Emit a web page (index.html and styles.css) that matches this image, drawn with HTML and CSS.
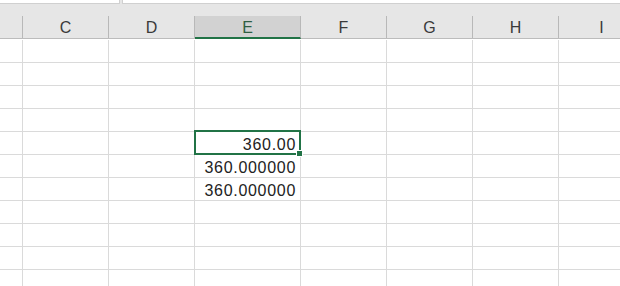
FILE: index.html
```html
<!DOCTYPE html>
<html lang="en">

<head>
  <meta charset="UTF-8">
  <meta name="viewport" content="width=device-width, initial-scale=1.0">
  <title>Sheet</title>
  <link rel="stylesheet" href="styles.css">
</head>

<body>
  <div class="formula-strip">
    <div class="name-box"></div>
    <div class="formula-box"></div>
  </div>

  <div class="col-headers">
    <div class="col-head corner"></div>
    <div class="col-head">C</div>
    <div class="col-head">D</div>
    <div class="col-head active">E</div>
    <div class="col-head">F</div>
    <div class="col-head">G</div>
    <div class="col-head">H</div>
    <div class="col-head">I</div>
  </div>

  <div class="sheet">
    <div class="row"><div class="cell"></div><div class="cell"></div><div class="cell"></div><div class="cell"></div><div class="cell"></div><div class="cell"></div><div class="cell"></div><div class="cell"></div></div>
    <div class="row"><div class="cell"></div><div class="cell"></div><div class="cell"></div><div class="cell"></div><div class="cell"></div><div class="cell"></div><div class="cell"></div><div class="cell"></div></div>
    <div class="row"><div class="cell"></div><div class="cell"></div><div class="cell"></div><div class="cell"></div><div class="cell"></div><div class="cell"></div><div class="cell"></div><div class="cell"></div></div>
    <div class="row"><div class="cell"></div><div class="cell"></div><div class="cell"></div><div class="cell"></div><div class="cell"></div><div class="cell"></div><div class="cell"></div><div class="cell"></div></div>
    <div class="row"><div class="cell"></div><div class="cell"></div><div class="cell"></div><div class="cell num selected">360.00</div><div class="cell"></div><div class="cell"></div><div class="cell"></div><div class="cell"></div></div>
    <div class="row"><div class="cell"></div><div class="cell"></div><div class="cell"></div><div class="cell num">360.000000</div><div class="cell"></div><div class="cell"></div><div class="cell"></div><div class="cell"></div></div>
    <div class="row"><div class="cell"></div><div class="cell"></div><div class="cell"></div><div class="cell num">360.000000</div><div class="cell"></div><div class="cell"></div><div class="cell"></div><div class="cell"></div></div>
    <div class="row"><div class="cell"></div><div class="cell"></div><div class="cell"></div><div class="cell"></div><div class="cell"></div><div class="cell"></div><div class="cell"></div><div class="cell"></div></div>
    <div class="row"><div class="cell"></div><div class="cell"></div><div class="cell"></div><div class="cell"></div><div class="cell"></div><div class="cell"></div><div class="cell"></div><div class="cell"></div></div>
    <div class="row"><div class="cell"></div><div class="cell"></div><div class="cell"></div><div class="cell"></div><div class="cell"></div><div class="cell"></div><div class="cell"></div><div class="cell"></div></div>
    <div class="row"><div class="cell"></div><div class="cell"></div><div class="cell"></div><div class="cell"></div><div class="cell"></div><div class="cell"></div><div class="cell"></div><div class="cell"></div></div>
  </div>
</body>

</html>
```

FILE: styles.css
```css
/* page */
body {
  margin: 0;
  background: #fff;
  font-family: "Liberation Sans", Arial, sans-serif;
  overflow: hidden;
}

/* bottom edge of the formula bar */
.formula-strip {
  display: flex;
  gap: 2px;
  height: 4px;
  background: #e6e6e6;
}

.name-box,
.formula-box {
  background: #fff;
  border-bottom: 1px solid #d0d0d0;
  box-sizing: border-box;
}

.name-box {
  width: 120px;
  border-right: 1px solid #d0d0d0;
}

.formula-box {
  flex: 1;
  border-left: 1px solid #d0d0d0;
}

/* column letters */
.col-headers {
  display: grid;
  grid-template-columns: 23px 86px 86px 106px 86px 86px 86px 86px;
  align-items: end;
  height: 35px;
  background: #e6e6e6;
  border-bottom: 1px solid #bcbcbc;
  box-sizing: border-box;
}

.col-head {
  height: 22px;
  box-sizing: border-box;
  border-right: 1px solid #b8b8b8;
  text-align: center;
  font-size: 16px;
  line-height: 22px;
  padding-top: 1px;
  color: #3a3a3a;
}

.col-head.active {
  background: #d2d2d2;
  border-bottom: 2px solid #217346;
  margin-bottom: -1px;
  height: 23px;
  color: #2f5e44;
}

/* grid of cells */
.sheet {
  margin-top: 1px;
}

.row {
  display: grid;
  grid-template-columns: 23px 86px 86px 106px 86px 86px 86px 86px;
  height: 23px;
}

.cell {
  box-sizing: border-box;
  border-right: 1px solid #dadada;
  border-bottom: 1px solid #dadada;
  font-size: 16px;
  line-height: 18px;
  padding-top: 4px;
  color: #222;
}

.cell.num {
  text-align: right;
  padding-right: 4px;
  letter-spacing: 0.7px;
}

/* active cell frame + fill handle */
.cell.selected {
  position: relative;
}

.cell.selected::before {
  content: "";
  position: absolute;
  top: -2px;
  left: -1px;
  right: -1px;
  bottom: -1px;
  border: 2px solid #217346;
}

.cell.selected::after {
  content: "";
  position: absolute;
  right: -3px;
  bottom: -3px;
  width: 5px;
  height: 5px;
  background: #217346;
  border: 1px solid #fff;
}
```
